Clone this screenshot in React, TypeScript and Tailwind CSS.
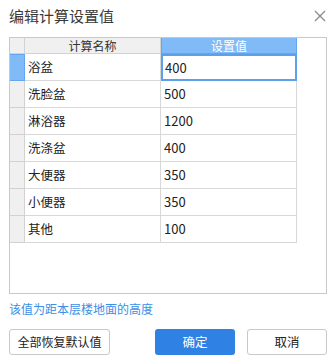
import React from "react";

const rows = [
  { name: "浴盆", value: "400" },
  { name: "洗脸盆", value: "500" },
  { name: "淋浴器", value: "1200" },
  { name: "洗涤盆", value: "400" },
  { name: "大便器", value: "350" },
  { name: "小便器", value: "350" },
  { name: "其他", value: "100" },
];

export default function App() {
  return (
    <div
      className="w-[336px] h-[360px] bg-white flex flex-col text-[#333]"
      style={{ fontFamily: '"Noto Sans CJK SC", "Noto Sans", sans-serif' }}
    >
      {/* title bar */}
      <div className="h-[37px] flex items-start justify-between pl-[9px] pr-[10px] pt-[6px]">
        <span className="text-[15px] leading-[20px] text-[#3a3a3a]">编辑计算设置值</span>
        <svg width="12" height="12" viewBox="0 0 12 12" className="mt-[4px]">
          <path d="M1 1L11 11M11 1L1 11" stroke="#8a8a8a" strokeWidth="1.3" fill="none" />
        </svg>
      </div>

      {/* grid */}
      <div className="mx-[9px] h-[257px] border border-[#c9c9c9] bg-white">
        <div className="flex h-[16px] text-[12px] leading-[15px]">
          <div className="w-[15px] bg-[#f0f0f0] border-r border-b border-[#d2d2d2]" />
          <div className="w-[136px] bg-[#f0f0f0] border-r border-b border-[#d2d2d2] text-center text-[#333]">
            计算名称
          </div>
          <div className="w-[136px] bg-[#80bbf7] border border-t-0 border-[#62a6ef] text-center text-white">
            设置值
          </div>
        </div>
        {rows.map((r, i) => (
          <div key={r.name} className="flex h-[27px]">
            <div
              className={
                i === 0
                  ? "w-[15px] bg-[#80bbf7] border border-l-0 border-[#62a6ef]"
                  : "w-[15px] bg-[#f0f0f0] border-r border-b border-[#d2d2d2]"
              }
            />
            <div className="w-[136px] border-r border-b border-[#d8d8d8] flex items-center pl-[3px] text-[12.5px] text-[#222]">
              {r.name}
            </div>
            {i === 0 ? (
              <div className="w-[136px] border-2 border-[#5aa0ea] flex items-center pl-[2px] text-[13px] text-[#222]">
                {r.value}
              </div>
            ) : (
              <div className="w-[136px] border-r border-b border-[#d8d8d8] flex items-center pl-[3px] text-[13px] text-[#222]">
                {r.value}
              </div>
            )}
          </div>
        ))}
      </div>

      <div className="px-[9px] mt-[6px] text-[12px] leading-[18px] text-[#3b8fe6]">
        该值为距本层楼地面的高度
      </div>

      {/* buttons */}
      <div className="flex items-center px-[9px] mt-[11px]">
        <button className="w-[101px] h-[26px] rounded-[3px] border border-[#c8c8c8] bg-white text-[12px] text-[#222]">
          全部恢复默认值
        </button>
        <button className="ml-[45px] w-[80px] h-[26px] rounded-[3px] bg-[#2f81e3] text-[12.5px] text-white">
          确定
        </button>
        <button className="ml-[12px] w-[80px] h-[26px] rounded-[3px] border border-[#c8c8c8] bg-white text-[12.5px] text-[#222]">
          取消
        </button>
      </div>
    </div>
  );
}
